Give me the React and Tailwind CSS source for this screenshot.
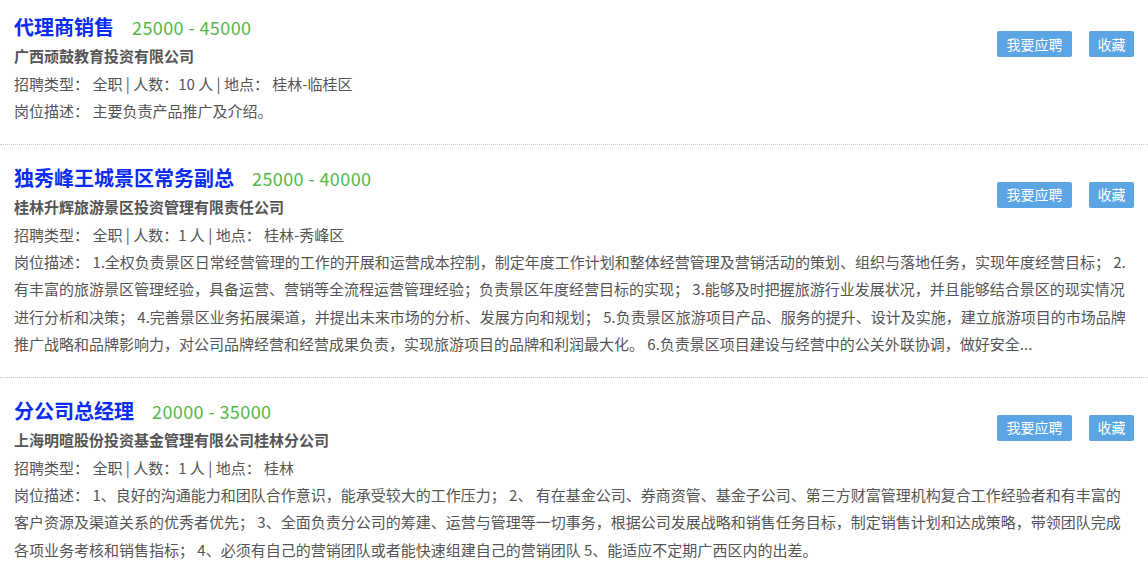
import React from 'react'

const jobs = [
  {
    title: '代理商销售',
    salary: '25000 - 45000',
    company: '广西顽鼓教育投资有限公司',
    type: '全职',
    count: '10',
    place: '桂林-临桂区',
    desc: '主要负责产品推广及介绍。',
  },
  {
    title: '独秀峰王城景区常务副总',
    salary: '25000 - 40000',
    company: '桂林升辉旅游景区投资管理有限责任公司',
    type: '全职',
    count: '1',
    place: '桂林-秀峰区',
    desc: '1.全权负责景区日常经营管理的工作的开展和运营成本控制，制定年度工作计划和整体经营管理及营销活动的策划、组织与落地任务，实现年度经营目标； 2.有丰富的旅游景区管理经验，具备运营、营销等全流程运营管理经验；负责景区年度经营目标的实现； 3.能够及时把握旅游行业发展状况，并且能够结合景区的现实情况进行分析和决策； 4.完善景区业务拓展渠道，并提出未来市场的分析、发展方向和规划； 5.负责景区旅游项目产品、服务的提升、设计及实施，建立旅游项目的市场品牌推广战略和品牌影响力，对公司品牌经营和经营成果负责，实现旅游项目的品牌和利润最大化。 6.负责景区项目建设与经营中的公关外联协调，做好安全...',
  },
  {
    title: '分公司总经理',
    salary: '20000 - 35000',
    company: '上海明暄股份投资基金管理有限公司桂林分公司',
    type: '全职',
    count: '1',
    place: '桂林',
    desc: '1、良好的沟通能力和团队合作意识，能承受较大的工作压力； 2、 有在基金公司、券商资管、基金子公司、第三方财富管理机构复合工作经验者和有丰富的客户资源及渠道关系的优秀者优先； 3、全面负责分公司的筹建、运营与管理等一切事务，根据公司发展战略和销售任务目标，制定销售计划和达成策略，带领团队完成各项业务考核和销售指标； 4、必须有自己的营销团队或者能快速组建自己的营销团队 5、能适应不定期广西区内的出差。',
  },
]

function JobCard({ job, first }) {
  return (
    <div className={`px-[14px] pb-[19px] border-b border-dotted border-[#c8c8c8] ${first ? 'pt-[12px]' : 'pt-[18px]'}`}>
      <div className="flex items-start justify-between">
        <div>
          <div className="flex items-baseline leading-[30px]">
            <span className="text-[20px] font-bold text-[#0a2cf5]">{job.title}</span>
            <span className="ml-[18px] text-[18px] tracking-[0.4px] text-[#52b947]">{job.salary}</span>
          </div>
          <div className="text-[15px] font-bold text-[#555] leading-[28px]">{job.company}</div>
          <div className="text-[15px] text-[#555] leading-[27px]">
            招聘类型： {job.type} | 人数：{job.count} 人 | 地点： {job.place}
          </div>
        </div>
        <div className="flex gap-[17px] mt-[19px]">
          <button className="h-[26px] w-[75px] rounded-[2px] bg-[#5ca5e4] text-white text-[14px]">我要应聘</button>
          <button className="h-[26px] w-[45px] rounded-[2px] bg-[#5ca5e4] text-white text-[14px]">收藏</button>
        </div>
      </div>
      <div className="text-[15px] text-[#555] leading-[27.5px]">
        岗位描述： {job.desc}
      </div>
    </div>
  )
}

export default function App() {
  return (
    <div className="w-[1148px] h-[573px] overflow-hidden bg-white font-['Microsoft_YaHei','Noto_Sans_CJK_SC',sans-serif]">
      {jobs.map((j, i) => (
        <JobCard key={j.title} job={j} first={i === 0} />
      ))}
    </div>
  )
}
